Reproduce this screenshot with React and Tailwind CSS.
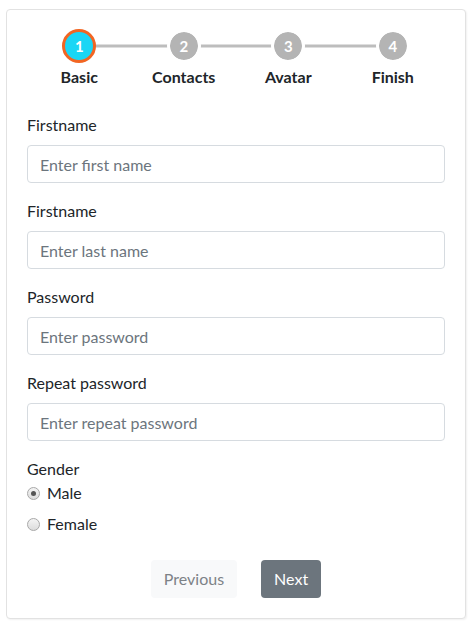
import React, { useState } from "react";

const steps = ["Basic", "Contacts", "Avatar", "Finish"];

const fields = [
  { label: "Firstname", placeholder: "Enter first name", type: "text" },
  { label: "Firstname", placeholder: "Enter last name", type: "text" },
  { label: "Password", placeholder: "Enter password", type: "password" },
  { label: "Repeat password", placeholder: "Enter repeat password", type: "password" },
];

const Radio = ({ checked, label, onClick }) => (
  <div className="flex items-center h-6 cursor-pointer" onClick={onClick}>
    <span className="w-[13px] h-[13px] rounded-full border border-[#a8a8a8] bg-gradient-to-b from-[#f4f4f4] to-[#dcdcdc] flex items-center justify-center">
      {checked && <span className="w-[5px] h-[5px] rounded-full bg-[#555]" />}
    </span>
    <span className="ml-[7px] text-[16px] text-[#212529]">{label}</span>
  </div>
);

const App = () => {
  const [gender, setGender] = useState("male");

  return (
    <div className="min-h-screen bg-white pt-[9px] pl-[6px]" style={{ fontFamily: "Lato, 'Liberation Sans', sans-serif" }}>
      <div className="w-[460px] border border-[#e2e2e2] rounded shadow-[1px_1px_2px_rgba(0,0,0,0.06)] px-5 pt-[19px] pb-5 bg-white">
        {/* stepper */}
        <div className="grid grid-cols-4">
          {steps.map((s, i) => (
            <div key={s} className="flex flex-col items-center">
              <div className="relative w-full h-[34px] flex items-center justify-center">
                {i > 0 && <div className="absolute left-0 right-1/2 top-1/2 -translate-y-1/2 h-[3px] bg-[#bdbdbd]" />}
                {i < steps.length - 1 && <div className="absolute left-1/2 right-0 top-1/2 -translate-y-1/2 h-[3px] bg-[#bdbdbd]" />}
                {i === 0 ? (
                  <div className="relative z-10 w-[34px] h-[34px] rounded-full border-[3px] border-[#f26522] bg-[#1ad6f5] flex items-center justify-center text-white font-bold text-[15px]">
                    1
                  </div>
                ) : (
                  <div className="relative z-10 w-[28px] h-[28px] rounded-full bg-[#b4b4b4] outline-[3px] outline-white flex items-center justify-center text-white font-bold text-[15px]">
                    {i + 1}
                  </div>
                )}
              </div>
              <div className="mt-[2px] text-[16px] leading-6 font-bold text-[#212529]">{s}</div>
            </div>
          ))}
        </div>

        <div className="mt-6">
          {fields.map((f, i) => (
            <div key={i} className="mb-4">
              <label className="block text-[16px] leading-6 text-[#212529] mb-2">{f.label}</label>
              <input
                type={f.type}
                placeholder={f.placeholder}
                className="w-full h-[38px] px-3 rounded border border-[#d6dbe0] text-[16px] text-[#495057] placeholder:text-[#6c757d] outline-none"
              />
            </div>
          ))}

          <div className="text-[16px] leading-6 text-[#212529]">Gender</div>
          <Radio checked={gender === "male"} label="Male" onClick={() => setGender("male")} />
          <div className="mt-[7px]">
            <Radio checked={gender === "female"} label="Female" onClick={() => setGender("female")} />
          </div>

          <div className="flex justify-center gap-6 mt-6">
            <button className="h-[38px] px-[13px] rounded bg-[#f8f9fa] text-[#7d8287] text-[16px]">Previous</button>
            <button className="h-[38px] px-[13px] rounded bg-[#6c757d] text-white text-[16px]">Next</button>
          </div>
        </div>
      </div>
    </div>
  );
};

export default App;
